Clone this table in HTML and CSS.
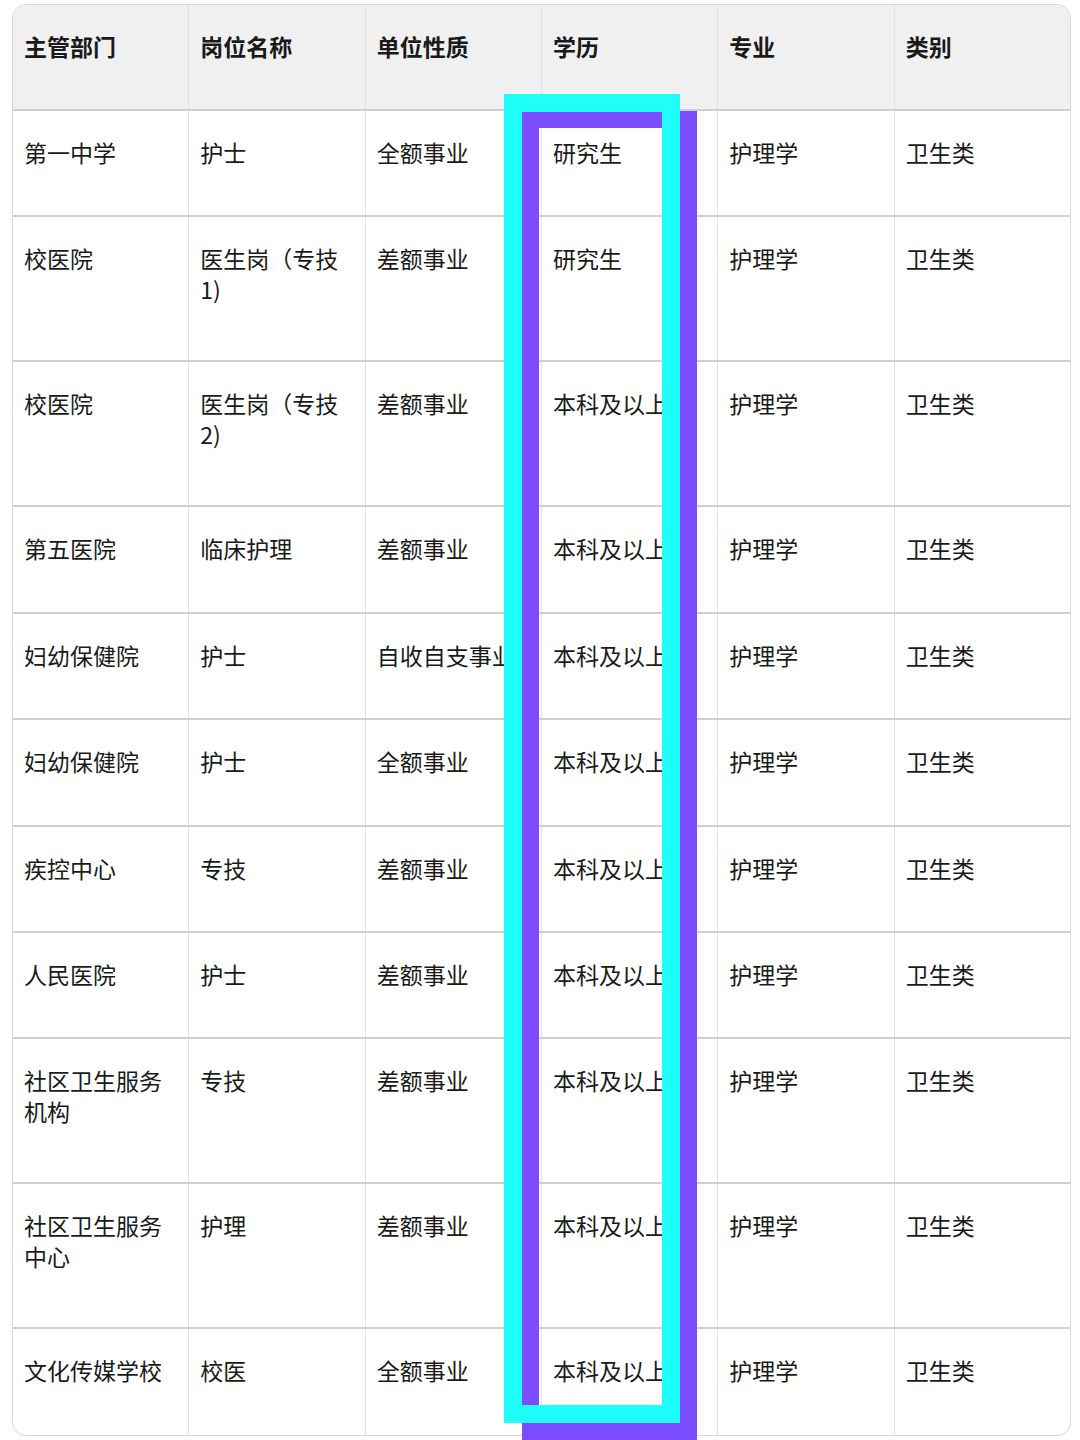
FILE: index.html
```html
<!DOCTYPE html>
<html lang="zh-CN">
<head>
<meta charset="utf-8">
<title>岗位表</title>
<link rel="stylesheet" href="styles.css">
</head>
<body>
<div class="page">
  <div class="table">
    <div class="row head">
      <div class="cell">主管部门</div><div class="cell">岗位名称</div><div class="cell">单位性质</div><div class="cell">学历</div><div class="cell">专业</div><div class="cell">类别</div>
    </div>
    <div class="row">
      <div class="cell">第一中学</div><div class="cell">护士</div><div class="cell">全额事业</div><div class="cell">研究生</div><div class="cell">护理学</div><div class="cell">卫生类</div>
    </div>
    <div class="row tall">
      <div class="cell">校医院</div><div class="cell">医生岗（专技1)</div><div class="cell">差额事业</div><div class="cell">研究生</div><div class="cell">护理学</div><div class="cell">卫生类</div>
    </div>
    <div class="row tall">
      <div class="cell">校医院</div><div class="cell">医生岗（专技2)</div><div class="cell">差额事业</div><div class="cell">本科及以上</div><div class="cell">护理学</div><div class="cell">卫生类</div>
    </div>
    <div class="row">
      <div class="cell">第五医院</div><div class="cell">临床护理</div><div class="cell">差额事业</div><div class="cell">本科及以上</div><div class="cell">护理学</div><div class="cell">卫生类</div>
    </div>
    <div class="row">
      <div class="cell">妇幼保健院</div><div class="cell">护士</div><div class="cell">自收自支事业</div><div class="cell">本科及以上</div><div class="cell">护理学</div><div class="cell">卫生类</div>
    </div>
    <div class="row">
      <div class="cell">妇幼保健院</div><div class="cell">护士</div><div class="cell">全额事业</div><div class="cell">本科及以上</div><div class="cell">护理学</div><div class="cell">卫生类</div>
    </div>
    <div class="row">
      <div class="cell">疾控中心</div><div class="cell">专技</div><div class="cell">差额事业</div><div class="cell">本科及以上</div><div class="cell">护理学</div><div class="cell">卫生类</div>
    </div>
    <div class="row">
      <div class="cell">人民医院</div><div class="cell">护士</div><div class="cell">差额事业</div><div class="cell">本科及以上</div><div class="cell">护理学</div><div class="cell">卫生类</div>
    </div>
    <div class="row tall">
      <div class="cell">社区卫生服务机构</div><div class="cell">专技</div><div class="cell">差额事业</div><div class="cell">本科及以上</div><div class="cell">护理学</div><div class="cell">卫生类</div>
    </div>
    <div class="row tall">
      <div class="cell">社区卫生服务中心</div><div class="cell">护理</div><div class="cell">差额事业</div><div class="cell">本科及以上</div><div class="cell">护理学</div><div class="cell">卫生类</div>
    </div>
    <div class="row last">
      <div class="cell">文化传媒学校</div><div class="cell">校医</div><div class="cell">全额事业</div><div class="cell">本科及以上</div><div class="cell">护理学</div><div class="cell">卫生类</div>
    </div>
  </div>
  <div class="mark purple"></div>
  <div class="mark cyan"></div>
</div>
</body>
</html>
```

FILE: styles.css
```css
html, body {
  margin: 0;
  padding: 0;
  background: #ffffff;
}

.page {
  position: relative;
  width: 1080px;
  height: 1440px;
  overflow: hidden;
  font-family: "Noto Sans CJK SC", "Noto Sans", sans-serif;
  color: #1a1a1a;
}

.table {
  margin: 4px 0 0 12px;
  width: 1059px;
  border: 1px solid #d8d8d8;
  border-radius: 14px;
  overflow: hidden;
  box-sizing: border-box;
  display: flex;
  flex-direction: column;
}

.row {
  display: flex;
  height: 106.4px;
  border-bottom: 2px solid #cfcfcf;
  box-sizing: border-box;
}

.row.tall {
  height: 145px;
}

.row.last {
  border-bottom: none;
  height: 106px;
}

.row.head {
  background: #f0f0f0;
  font-weight: 700;
  height: 106px;
}

.cell {
  flex: 1 1 0;
  min-width: 0;
  box-sizing: border-box;
  padding: 26px 11px 0 11px;
  font-size: 23px;
  line-height: 31px;
  border-right: 1px solid #e2e2e2;
  word-break: break-all;
}

.cell:last-child {
  border-right: none;
}

.mark {
  position: absolute;
  box-sizing: border-box;
}

.purple {
  left: 522px;
  top: 111px;
  width: 175px;
  height: 1329px;
  border: 17px solid #7c4dff;
}

.cyan {
  left: 504px;
  top: 94px;
  width: 176px;
  height: 1329px;
  border: 18px solid #1ffffa;
}
```
